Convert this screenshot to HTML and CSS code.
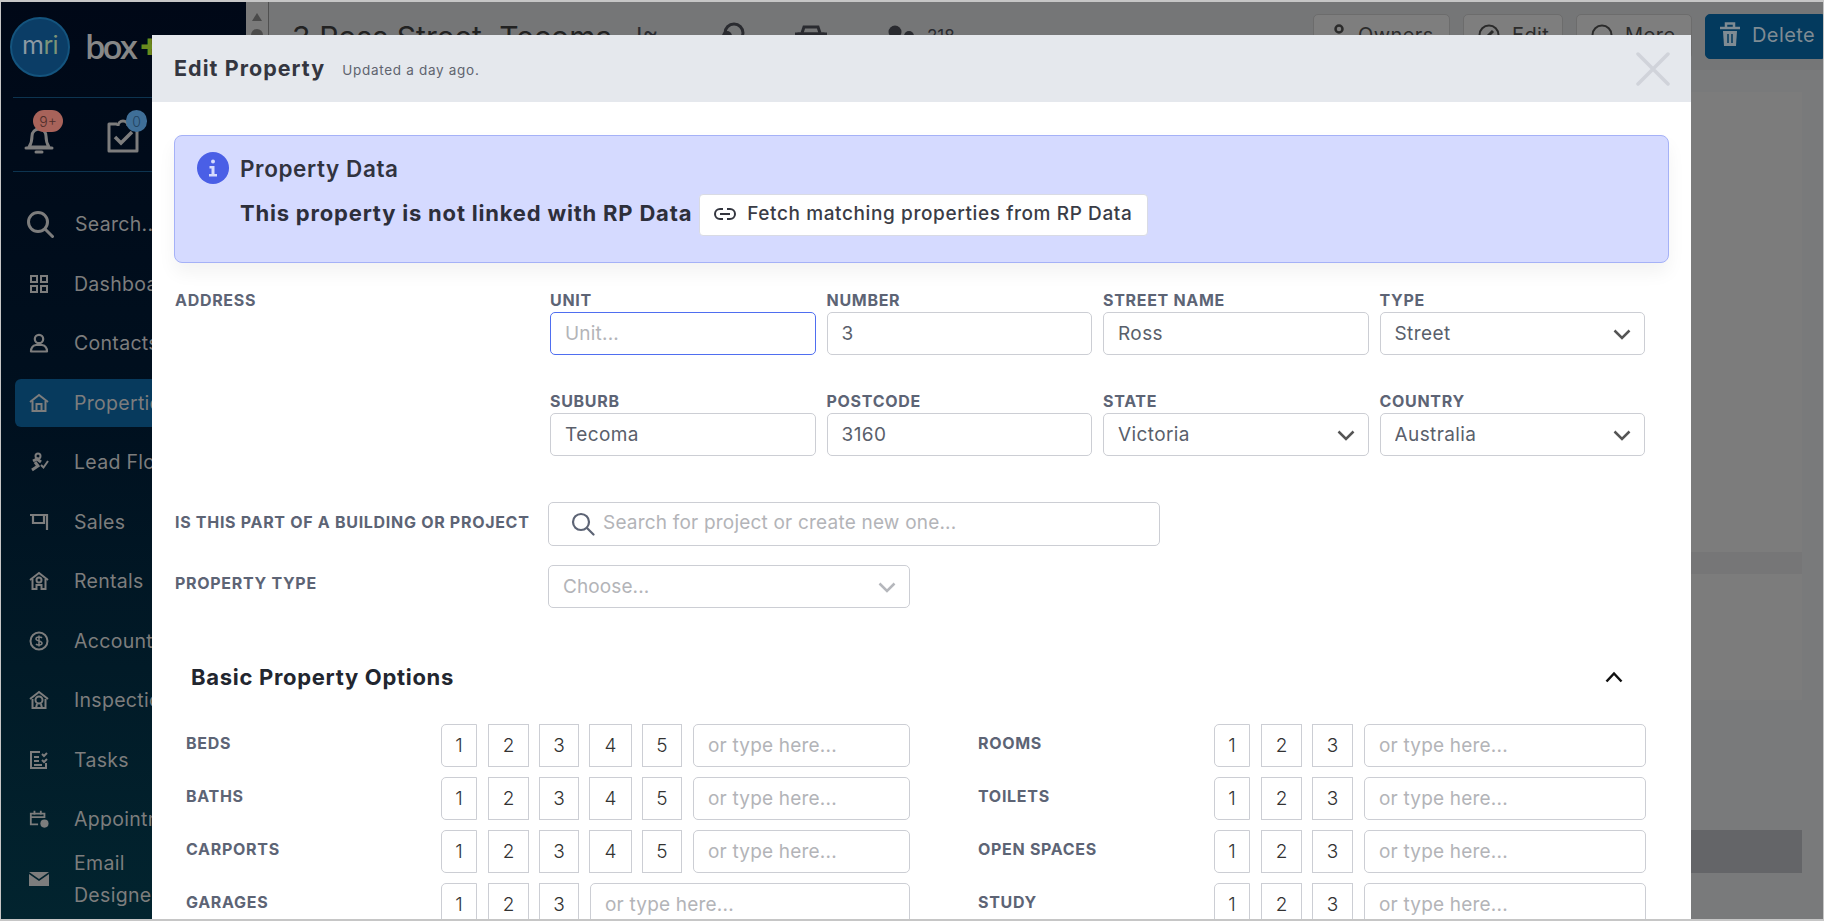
FILE: index.html
```html
<!DOCTYPE html>
<html lang="en">
<head>
    <meta charset="UTF-8">
    <meta name="viewport" content="width=device-width, initial-scale=1.0">
    <title>Edit Property</title>
    <link rel="stylesheet" href="styles.css">
</head>
<body>
<div class="window">
    <aside class="sidebar">
        <div class="brand">
            <div class="brand-circle">m<span class="brand-r">r</span><span class="brand-i">i</span></div>
            <div class="brand-box">box<span class="brand-plus">+</span></div>
        </div>
        <div class="alerts">
            <div class="alert-item bell">
                <svg width="30" height="32" viewBox="0 0 30 32" fill="none" stroke="#7d7d7d" stroke-width="3"><path d="M5 25c2-3 3-5 3-11a7 7 0 0 1 14 0c0 6 1 8 3 11z" stroke-linejoin="round"/><path d="M2 26h26" stroke-linecap="round"/><path d="M12 30h6" stroke-linecap="round"/></svg>
                <span class="badge badge-red">9+</span>
            </div>
            <div class="alert-item clip">
                <svg width="32" height="34" viewBox="0 0 32 34" fill="none" stroke="#7d7d7d" stroke-width="3"><path d="M10 5H2v27h28V5h-8" stroke-linejoin="round"/><path d="M11 7a5 5 0 0 1 10 0" /><path d="M8 18l6 6 11-11" stroke-width="3.5"/></svg>
                <span class="badge badge-blue">0</span>
            </div>
        </div>
        <nav class="nav">
            <a class="nav-item nav-search">
                <svg class="search-icon" width="28" height="28" viewBox="0 0 28 28" fill="none" stroke="#7d7d7d" stroke-width="3"><circle cx="12" cy="12" r="9.5"/><path d="M19 19l7.5 7.5" stroke-linecap="round"/></svg>
                <span>Search...</span>
            </a>
            <a class="nav-item">
                <svg width="20" height="20" viewBox="0 0 20 20" fill="none" stroke="#7d7d7d" stroke-width="2"><rect x="2" y="2" width="6" height="6"/><rect x="12" y="2" width="6" height="6"/><rect x="2" y="12" width="6" height="6"/><rect x="12" y="12" width="6" height="6"/></svg>
                <span>Dashboard</span>
            </a>
            <a class="nav-item">
                <svg width="20" height="20" viewBox="0 0 20 20" fill="none" stroke="#7d7d7d" stroke-width="2.2"><circle cx="10" cy="6" r="4.2"/><path d="M2 18.500c0-4 2-6 5-6.500h6c3 .5 5 2.500 5 6.500z" stroke-linejoin="round"/></svg>
                <span>Contacts</span>
            </a>
            <a class="nav-item active">
                <svg width="20" height="20" viewBox="0 0 20 20" fill="none" stroke="#7d7d7d" stroke-width="2"><path d="M1 9l9-7 9 7"/><path d="M3.500 8v10h13V8"/><path d="M7.500 18v-7h5v7"/></svg>
                <span>Properties</span>
            </a>
            <a class="nav-item">
                <svg width="20" height="20" viewBox="0 0 20 20" fill="none" stroke="#7d7d7d" stroke-width="2"><circle cx="9" cy="4" r="2.500"/><path d="M4 9l4-2 4 3" stroke-width="3"/><path d="M6 10l3 4-6 4" stroke-width="3"/><path d="M12 13l2.500 2.500L19 9"/></svg>
                <span>Lead Flow</span>
            </a>
            <a class="nav-item">
                <svg width="20" height="20" viewBox="0 0 20 20" fill="none" stroke="#7d7d7d" stroke-width="2.200"><path d="M1 3h17v15"/><path d="M4 3v8h11V3"/></svg>
                <span>Sales</span>
            </a>
            <a class="nav-item">
                <svg width="20" height="20" viewBox="0 0 20 20" fill="none" stroke="#7d7d7d" stroke-width="2"><path d="M1 9l9-7 9 7"/><path d="M3.500 8v10h4v-4h5v4h4V8"/><circle cx="10" cy="9" r="2.500"/></svg>
                <span>Rentals</span>
            </a>
            <a class="nav-item">
                <svg width="20" height="20" viewBox="0 0 20 20" fill="none" stroke="#7d7d7d" stroke-width="2"><circle cx="10" cy="10" r="8.500"/><path d="M13 7c-1-1.500-6-1.500-6 .8 0 2.700 6 1.500 6 4.400 0 2.300-5 2.300-6 .8M10 4.500v11" stroke-width="1.500"/></svg>
                <span>Accounts</span>
            </a>
            <a class="nav-item">
                <svg width="20" height="20" viewBox="0 0 20 20" fill="none" stroke="#7d7d7d" stroke-width="2"><path d="M1 9l9-7 9 7"/><path d="M3.500 9v9h13V9"/><circle cx="10" cy="10" r="3.500"/><path d="M7 18l1-4M13 18l-1-4"/></svg>
                <span>Inspections</span>
            </a>
            <a class="nav-item">
                <svg width="20" height="20" viewBox="0 0 20 20" fill="none" stroke="#7d7d7d" stroke-width="2"><path d="M11 2H2v16h15v-5"/><path d="M5 7h5M5 11h5M5 15h8"/><path d="M13 4l2 2 3-3M13 10l2 2 3-3"/></svg>
                <span>Tasks</span>
            </a>
            <a class="nav-item">
                <svg width="22" height="20" viewBox="0 0 22 20" fill="none" stroke="#7d7d7d" stroke-width="2"><path d="M10 16H2V4h15v5"/><path d="M2 8h15M6 1v4M13 1v4"/><circle cx="17" cy="15" r="4.500" fill="#7d7d7d" stroke="none"/></svg>
                <span>Appointments</span>
            </a>
            <a class="nav-item">
                <svg width="20" height="14" viewBox="0 0 20 14"><path d="M0 0h20L10 7z" fill="#7d7d7d"/><path d="M0 2l10 7 10-7v12H0z" fill="#7d7d7d"/></svg>
                <span class="two-line">Email<br>Designer</span>
            </a>
        </nav>
    </aside>

    <div class="scroll-strip">
        <span class="scroll-arrow"></span>
        <span class="scroll-thumb"></span>
    </div>

    <main class="main">
        <header class="topbar">
            <h1 class="street">3 Ross Street, Tecoma</h1>
            <span class="stat-sort">I≈</span>
            <svg class="stat-lock" width="24" height="24" viewBox="0 0 24 24" fill="none" stroke="#2a2b30" stroke-width="3"><circle cx="13" cy="11" r="9"/><circle cx="6" cy="14" r="5" fill="#2a2b30" stroke="none"/></svg>
            <svg class="stat-car" width="34" height="20" viewBox="0 0 34 20" fill="none" stroke="#2a2b30" stroke-width="3"><path d="M8 8l2-6h14l2 6"/><path d="M1 9h32" /><rect x="5" y="9" width="24" height="9" fill="#2a2b30"/></svg>
            <svg class="stat-people" width="27" height="20" viewBox="0 0 27 20" fill="#2a2b30"><circle cx="7" cy="7" r="6.500"/><circle cx="21" cy="11" r="5"/><rect x="0" y="13" width="27" height="7"/></svg>
            <span class="stat-count">218</span>
            <div class="top-actions">
                <button class="top-btn btn-owners"><svg width="14" height="24" viewBox="0 0 14 24" fill="none" stroke="#2b2b2b" stroke-width="2.500"><circle cx="7" cy="6" r="3.500"/><path d="M1 22v-6h12v6"/></svg>Owners</button>
                <button class="top-btn btn-edit"><svg width="22" height="22" viewBox="0 0 22 22" fill="none" stroke="#2b2b2b" stroke-width="2"><circle cx="11" cy="11" r="9.500"/><path d="M7 15l8-8" stroke-width="3"/></svg>Edit</button>
                <button class="top-btn btn-more"><svg width="22" height="22" viewBox="0 0 22 22" fill="none" stroke="#2b2b2b" stroke-width="2"><circle cx="11" cy="11" r="9.500"/><path d="M6 14h2M10 14h2M14 14h2"/></svg>More</button>
                <button class="top-btn btn-delete"><svg width="20" height="26" viewBox="0 0 20 26" fill="none" stroke="#7f8b93" stroke-width="2.500"><path d="M0 6h20"/><path d="M6 5V1.500h8V5"/><path d="M3 9l1 15h12l1-15z" fill="#7f8b93" stroke="none"/><path d="M8 12v9M12 12v9" stroke="#033a5e" stroke-width="1.500"/></svg>Delete</button>
            </div>
        </header>
        <div class="content">
            <div class="panel panel-tall"></div>
            <div class="panel-band"></div>
            <div class="panel panel-short"></div>
            <div class="dark-band"></div>
        </div>
    </main>

    <!-- modal sits over the page -->
    <section class="modal">
        <div class="modal-head">
            <h2>Edit Property</h2>
            <span class="updated">Updated a day ago.</span>
            <svg class="modal-close" width="34" height="34" viewBox="0 0 34 34" stroke="#d0d3da" stroke-width="3.500" stroke-linecap="round"><path d="M2 2l30 30M32 2L2 32"/></svg>
        </div>
        <div class="modal-body">
            <div class="info-box">
                <div class="info-title">
                    <svg width="32" height="32" viewBox="0 0 32 32"><circle cx="16" cy="16" r="16" fill="#4a5fe6"/><circle cx="16" cy="9.500" r="2" fill="#d6dbfd"/><path d="M12.500 14h5v8h2.500v2.500h-8V22h2.500v-5.500h-2z" fill="#d6dbfd"/></svg>
                    <span>Property Data</span>
                </div>
                <div class="info-line">
                    <strong>This property is not linked with RP Data</strong>
                    <button class="fetch-btn">
                        <svg width="22" height="14" viewBox="0 0 22 14" fill="none" stroke="#34363f" stroke-width="2"><path d="M9 2H6a5 5 0 0 0 0 10h3M13 2h3a5 5 0 0 1 0 10h-3M6 7h10"/></svg>
                        Fetch matching properties from RP Data
                    </button>
                </div>
            </div>

            <div class="address">
                <div class="field-label">Address</div>
                <div class="address-grid">
                    <div class="field"><label class="field-label">Unit</label><input class="input focused" type="text" placeholder="Unit..."></div>
                    <div class="field"><label class="field-label">Number</label><input class="input" type="text" value="3"></div>
                    <div class="field"><label class="field-label">Street Name</label><input class="input" type="text" value="Ross"></div>
                    <div class="field"><label class="field-label">Type</label>
                        <div class="select-wrap"><select class="input"><option>Street</option></select>
                            <svg class="chevron" width="18" height="11" viewBox="0 0 18 11" fill="none" stroke="#555" stroke-width="2.500"><path d="M1.500 1.500L9 9l7.500-7.500"/></svg></div>
                    </div>
                    <div class="field"><label class="field-label">Suburb</label><input class="input" type="text" value="Tecoma"></div>
                    <div class="field"><label class="field-label">Postcode</label><input class="input" type="text" value="3160"></div>
                    <div class="field"><label class="field-label">State</label>
                        <div class="select-wrap"><select class="input"><option>Victoria</option></select>
                            <svg class="chevron" width="18" height="11" viewBox="0 0 18 11" fill="none" stroke="#555" stroke-width="2.500"><path d="M1.500 1.500L9 9l7.500-7.500"/></svg></div>
                    </div>
                    <div class="field"><label class="field-label">Country</label>
                        <div class="select-wrap"><select class="input"><option>Australia</option></select>
                            <svg class="chevron" width="18" height="11" viewBox="0 0 18 11" fill="none" stroke="#555" stroke-width="2.500"><path d="M1.500 1.500L9 9l7.500-7.500"/></svg></div>
                    </div>
                </div>
            </div>

            <div class="wide-row row-project">
                <label class="field-label">Is this part of a building or project</label>
                <div class="project-search">
                    <svg width="24" height="24" viewBox="0 0 24 24" fill="none" stroke="#5d6475" stroke-width="2.200"><circle cx="10" cy="10" r="8"/><path d="M16 16l6.500 6.500" stroke-linecap="round"/></svg>
                    <input type="text" placeholder="Search for project or create new one...">
                </div>
            </div>
            <div class="wide-row row-type">
                <label class="field-label">Property Type</label>
                <div class="select-wrap type-select"><select class="input placeholder"><option>Choose...</option></select>
                    <svg class="chevron" width="18" height="11" viewBox="0 0 18 11" fill="none" stroke="#b5b7bc" stroke-width="2.500"><path d="M1.500 1.500L9 9l7.500-7.500"/></svg></div>
            </div>

            <div class="section-head">
                <h3>Basic Property Options</h3>
                <svg width="18" height="12" viewBox="0 0 18 12" fill="none" stroke="#111" stroke-width="2.500"><path d="M1.500 10.500L9 2.500l7.500 8"/></svg>
            </div>

            <div class="options">
                <div class="opt-col opt-left">
                    <div class="opt-row"><label class="field-label">Beds</label><div class="nums"><span class="num">1</span><span class="num">2</span><span class="num">3</span><span class="num">4</span><span class="num">5</span></div><input class="input" placeholder="or type here..."></div>
                    <div class="opt-row"><label class="field-label">Baths</label><div class="nums"><span class="num">1</span><span class="num">2</span><span class="num">3</span><span class="num">4</span><span class="num">5</span></div><input class="input" placeholder="or type here..."></div>
                    <div class="opt-row"><label class="field-label">Carports</label><div class="nums"><span class="num">1</span><span class="num">2</span><span class="num">3</span><span class="num">4</span><span class="num">5</span></div><input class="input" placeholder="or type here..."></div>
                    <div class="opt-row"><label class="field-label">Garages</label><div class="nums"><span class="num">1</span><span class="num">2</span><span class="num">3</span></div><input class="input" placeholder="or type here..."></div>
                </div>
                <div class="opt-col opt-right">
                    <div class="opt-row"><label class="field-label">Rooms</label><div class="nums"><span class="num">1</span><span class="num">2</span><span class="num">3</span></div><input class="input" placeholder="or type here..."></div>
                    <div class="opt-row"><label class="field-label">Toilets</label><div class="nums"><span class="num">1</span><span class="num">2</span><span class="num">3</span></div><input class="input" placeholder="or type here..."></div>
                    <div class="opt-row"><label class="field-label">Open Spaces</label><div class="nums"><span class="num">1</span><span class="num">2</span><span class="num">3</span></div><input class="input" placeholder="or type here..."></div>
                    <div class="opt-row"><label class="field-label">Study</label><div class="nums"><span class="num">1</span><span class="num">2</span><span class="num">3</span></div><input class="input" placeholder="or type here..."></div>
                </div>
            </div>
        </div>
    </section>
</div>
</body>
</html>
```
FILE: styles.css
```css
* {
    box-sizing: border-box;
}
html, body {
    margin: 0;
    height: 100%;
    overflow: hidden;
}
body {
    font-family: Inter, "Open Sans", sans-serif;
    color: #333;
}
.window {
    position: relative;
    display: flex;
    width: 1824px;
    height: 921px;
    overflow: hidden;
    border: solid #c6c6c6;
    border-width: 2px 1px;
    background: #797a7b;
}

/* sidebar */
.sidebar {
    flex: none;
    width: 245px;
    height: 100%;
    background: linear-gradient(180deg, #000817 0%, #00101f 45%, #02242f 100%);
    color: #7d7d7d;
}
.brand {
    display: flex;
    align-items: center;
    height: 95px;
    padding: 0 0 6px 9px;
}
.brand-circle {
    display: flex;
    align-items: center;
    justify-content: center;
    width: 60px;
    height: 60px;
    border-radius: 50%;
    background: #0b3d66;
    border: 2px solid #14547e;
    color: #8d99a3;
    font-size: 25px;
    font-weight: 400;
    letter-spacing: -0.500px;
    padding-bottom: 3px;
}
.brand-r, .brand-i {
    color: #7d9478;
}
.brand-box {
    margin-left: 15px;
    font-family: "Open Sans", sans-serif;
    font-size: 33px;
    font-weight: 600;
    letter-spacing: -3px;
    color: #878787;
}
.brand-plus {
    margin-left: 5px;
    color: #6a8a1e;
    font-weight: 800;
}
.alerts {
    display: flex;
    height: 75px;
    margin-left: 12px;
    border-top: 1px solid #0d3450;
    border-bottom: 1px solid #0d3450;
}
.alert-item {
    position: relative;
    height: 100%;
}
.alert-item svg {
    display: block;
}
.bell {
    margin-left: 11px;
    padding-top: 24px;
}
.clip {
    margin-left: 53px;
    padding-top: 21px;
}
.badge {
    position: absolute;
    top: 12px;
    display: flex;
    align-items: center;
    justify-content: center;
    height: 22px;
    font-size: 14px;
    font-weight: 300;
    border-radius: 11px;
}
.badge-red {
    left: 9px;
    width: 30px;
    background: #a8635a;
    color: #4f2e2b;
}
.badge-blue {
    left: 19px;
    width: 21px;
    background: #3f6f98;
    color: #22435f;
}
.nav {
    display: flex;
    flex-direction: column;
    gap: 11.500px;
    padding: 28px 0 0 14px;
}
.nav-item {
    display: flex;
    align-items: center;
    gap: 25px;
    flex: none;
    height: 48px;
    padding-left: 14px;
    border-radius: 6px 0 0 6px;
    font-size: 19.500px;
    letter-spacing: 0.300px;
    white-space: nowrap;
}
.nav-item svg {
    flex: none;
    width: 20px;
}
.nav-search {
    padding-left: 11px;
}
.nav-search svg.search-icon {
    width: 28px;
    margin-right: -4px;
}
.nav-item.active {
    background: #073a5d;
}
.two-line {
    line-height: 32px;
}

/* page behind the modal */
.scroll-strip {
    flex: none;
    position: relative;
    width: 23px;
    background: #7a7a7a;
    border-right: 1px solid #505050;
}
.scroll-arrow {
    position: absolute;
    left: 6px;
    top: 11px;
    border: solid transparent;
    border-width: 0 5px 8px;
    border-bottom-color: #4b4b4b;
}
.scroll-thumb {
    position: absolute;
    left: 5px;
    top: 27px;
    width: 12px;
    height: 12px;
    border-radius: 50%;
    background: #4b4b4b;
}
.main {
    flex: 1;
    min-width: 0;
}
.topbar {
    display: flex;
    align-items: flex-start;
    height: 68px;
    background: #757677;
    padding-left: 23px;
}
.street {
    flex: none;
    width: 344px;
    margin: 17px 0 0;
    font-size: 30px;
    font-weight: 400;
    letter-spacing: 0.100px;
    color: #222;
    white-space: nowrap;
}
.stat-sort {
    flex: none;
    width: 85px;
    margin-top: 20px;
    font-size: 24px;
    color: #2a2b30;
}
.stat-lock {
    flex: none;
    margin-top: 20px;
}
.stat-car {
    flex: none;
    margin: 23px 0 0 49px;
}
.stat-people {
    flex: none;
    margin: 23px 0 0 60px;
}
.stat-count {
    flex: none;
    margin: 24px 0 0 12px;
    font-size: 17px;
    color: #2a2b30;
}
.top-actions {
    display: flex;
    gap: 13px;
    margin-left: auto;
    padding-top: 12px;
}
.top-btn {
    display: flex;
    align-items: center;
    gap: 12px;
    height: 45px;
    padding: 0 14px 3px;
    background: #7e7e7e;
    border: 1px solid #6c6c6c;
    border-radius: 5px;
    font: 400 20px Inter, sans-serif;
    letter-spacing: 0.400px;
    color: #2b2b2b;
}
.top-btn svg {
    flex: none;
}
.btn-owners {
    width: 137px;
    padding-left: 18px;
}
.btn-edit {
    width: 100px;
}
.btn-more {
    width: 116px;
}
.btn-delete {
    width: 118px;
    background: #033a5e;
    border-color: #033a5e;
    color: #7f8b93;
    border-radius: 5px 0 0 5px;
}
.content {
    padding: 22px 21px 0 0;
}
.panel {
    background: #7c7c7c;
}
.panel-tall {
    height: 460px;
}
.panel-band {
    height: 22px;
    background: #767677;
}
.panel-short {
    height: 126px;
}
.dark-band {
    height: 43px;
    margin-top: 130px;
    background: #646568;
}

/* modal */
.modal {
    position: absolute;
    left: 151px;
    top: 33px;
    bottom: 0;
    width: 1539px;
    overflow: hidden;
    background: #fff;
}
.modal-head {
    display: flex;
    align-items: center;
    height: 67px;
    padding: 0 21px 0 22px;
    background: #e5e8ed;
}
.modal-head h2 {
    margin: 0 0 2px;
    font-size: 21.500px;
    font-weight: 700;
    letter-spacing: 1.050px;
    color: #343640;
}
.updated {
    margin: 3px 0 0 17px;
    font-size: 13.500px;
    color: #60646f;
    letter-spacing: 0.700px;
}
.modal-close {
    margin-left: auto;
}
.modal-body {
    padding: 33px 22px;
}
.info-box {
    height: 128px;
    padding: 16px 22px;
    background: #d5daff;
    border: 1px solid #a5b1f7;
    border-radius: 8px;
    box-shadow: 0 10px 18px rgba(0, 0, 0, 0.05);
}
.info-title {
    display: flex;
    align-items: center;
    gap: 11px;
    font-size: 22.500px;
    font-weight: 600;
    letter-spacing: 0.600px;
    color: #31333f;
}
.info-title svg {
    flex: none;
}
.info-line {
    display: flex;
    align-items: center;
    gap: 7px;
    margin-top: 10px;
    padding-left: 43px;
    font-size: 22px;
    color: #2d2f3b;
}
.info-line strong {
    font-weight: 700;
    letter-spacing: 0.800px;
    padding-bottom: 5px;
}
.fetch-btn {
    display: flex;
    align-items: center;
    gap: 11px;
    width: 449px;
    height: 42px;
    padding: 0 14px 3px;
    background: #fff;
    border: 1px solid #d9dbe4;
    border-radius: 4px;
    font: 500 19px Inter, sans-serif;
    letter-spacing: 0.600px;
    color: #3a3c46;
    white-space: nowrap;
}
.field-label {
    display: block;
    font-size: 16px;
    line-height: 18px;
    font-weight: 700;
    color: #5d6475;
    text-transform: uppercase;
    letter-spacing: 0.700px;
    white-space: nowrap;
}
.address {
    display: flex;
    margin-top: 28px;
}
.address > .field-label {
    width: 376px;
    flex: none;
    padding-left: 1px;
}
.address-grid {
    display: grid;
    grid-template-columns: repeat(4, 265.500px);
    column-gap: 11px;
    row-gap: 37px;
}
.field .field-label {
    margin-bottom: 3px;
}
.input {
    display: block;
    width: 100%;
    height: 43px;
    padding: 0 14px;
    background: #fff;
    border: 1px solid #ccced4;
    border-radius: 5px;
    font: 400 19px Inter, sans-serif;
    letter-spacing: 0.400px;
    color: #5a5f6b;
    outline: none;
    appearance: none;
}
.input::placeholder, .project-search input::placeholder {
    color: #b3b4b8;
    letter-spacing: 0.200px;
}
.input.focused {
    border-color: #4f6ef0;
}
.input.placeholder {
    color: #b3b4b8;
    letter-spacing: 0.100px;
}
.select-wrap {
    position: relative;
}
.chevron {
    position: absolute;
    right: 14px;
    top: 17px;
}
.wide-row {
    display: flex;
    align-items: flex-start;
}
.wide-row .field-label {
    width: 374px;
    flex: none;
    padding-left: 1px;
}
.row-project {
    margin-top: 46px;
}
.row-project .field-label {
    padding-top: 11px;
}
.row-type {
    margin-top: 19px;
}
.row-type .field-label {
    padding-top: 9px;
}
.project-search {
    display: flex;
    align-items: center;
    gap: 8px;
    width: 612px;
    height: 44px;
    padding-left: 22px;
    border: 1px solid #ccced4;
    border-radius: 5px;
}
.project-search svg {
    flex: none;
}
.project-search input {
    flex: 1;
    min-width: 0;
    padding: 0 0 3px;
    border: none;
    outline: none;
    font: 400 19px Inter, sans-serif;
    letter-spacing: 0.400px;
}
.type-select {
    width: 362px;
}
.section-head {
    display: flex;
    align-items: center;
    justify-content: space-between;
    height: 30px;
    margin-top: 54px;
    padding: 0 46px 0 17px;
}
.section-head h3 {
    margin: 0;
    font-size: 22px;
    font-weight: 700;
    letter-spacing: 0.700px;
    color: #22262f;
}
.options {
    display: grid;
    grid-template-columns: 724px 668px;
    column-gap: 68px;
    margin-top: 32px;
    padding-left: 12px;
}
.opt-col {
    display: flex;
    flex-direction: column;
    gap: 10px;
}
.opt-row {
    display: flex;
    align-items: center;
    height: 43px;
}
.opt-row .field-label {
    flex: none;
    padding-bottom: 5px;
}
.opt-left .field-label {
    width: 255px;
}
.opt-right .field-label {
    width: 236px;
}
.nums {
    display: flex;
    gap: 10px;
    flex: none;
    margin-right: 11px;
}
.num {
    display: flex;
    align-items: center;
    justify-content: center;
    width: 41px;
    height: 43px;
    border: 1px solid #ccced4;
    font-size: 19px;
    font-weight: 300;
    color: #333;
}
.num:first-child {
    width: 36px;
    margin-right: 1px;
    border-radius: 5px 0 0 5px;
}
.opt-left .num:nth-child(3), .num:nth-child(5) {
    width: 40px;
}
.num:nth-child(4) {
    width: 43px;
}
.opt-row .input {
    flex: 1;
    min-width: 0;
}
```
